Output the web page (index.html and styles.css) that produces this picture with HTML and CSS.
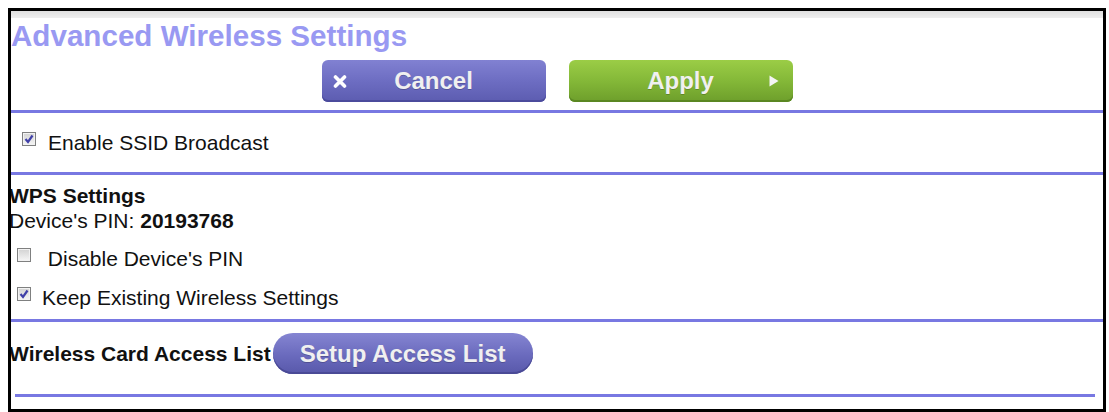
FILE: index.html
```html
<!DOCTYPE html>
<html lang="en">
<head>
	<meta charset="UTF-8">
	<title>Advanced Wireless Settings</title>
	<link rel="stylesheet" href="styles.css">
</head>
<body>
	<div class="frame">
		<div class="topband"></div>
		<h1 class="title">Advanced Wireless Settings</h1>
		<div class="actions">
			<button type="button" class="btn btn-cancel">
				<svg class="x-ico" width="14" height="13" viewBox="0 0 14 13"><path d="M2.5 2 L11.5 11 M11.5 2 L2.5 11" stroke="#fff" stroke-width="3.6" stroke-linecap="round"/></svg>
				<span>Cancel</span>
				<i></i>
			</button>
			<button type="button" class="btn btn-apply">
				<i></i>
				<span>Apply</span>
				<svg class="arrow" width="10" height="12" viewBox="0 0 10 12"><path d="M0.5 0.5 L9.5 6 L0.5 11.5 Z" fill="#f4f4f4"/></svg>
			</button>
		</div>
		<hr class="rule rule-top">

		<div class="sec sec-ssid">
			<label class="opt opt-ssid"><span class="cb"><svg width="10" height="10" viewBox="0 0 10 10"><path d="M1.5 5 L4 8 L8.5 1.5" fill="none" stroke="#4040a8" stroke-width="2.2"/></svg></span>Enable SSID Broadcast</label>
		</div>
		<hr class="rule">

		<div class="sec sec-wps">
			<div class="head">WPS Settings</div>
			<div class="pin">Device's PIN: <b>20193768</b></div>
			<label class="opt opt-pin"><span class="cb"></span>&nbsp;Disable Device's PIN</label>
			<label class="opt opt-keep"><span class="cb"><svg width="10" height="10" viewBox="0 0 10 10"><path d="M1.5 5 L4 8 L8.5 1.5" fill="none" stroke="#4040a8" stroke-width="2.2"/></svg></span>Keep Existing Wireless Settings</label>
		</div>
		<hr class="rule">

		<div class="sec sec-acl">
			<span class="head">Wireless Card Access List</span>
			<button type="button" class="pill">Setup Access List</button>
		</div>
		<hr class="rule rule-end">
	</div>
</body>
</html>
```

FILE: styles.css
```css
body{
	margin: 8px 0 0 8px;
	background-color: #fff;
	font-family: "Liberation Sans", Arial, sans-serif;
	color: #111;
}
.frame{
	width: 1098px;
	height: 404px;
	box-sizing: border-box;
	border: 3px solid #000;
	overflow: hidden;
}
.topband{
	height: 7px;
	background: linear-gradient(#e0e0e0, #eeeeee);
}
.title{
	margin: 1px 0 0 0;
	font-size: 29.6px;
	line-height: 33px;
	font-weight: bold;
	color: #9999f2;
}
.actions{
	display: flex;
	justify-content: center;
	gap: 23px;
	margin-top: 8px;
}
.btn{
	width: 224px;
	height: 42px;
	border: 0;
	border-radius: 6px;
	display: grid;
	grid-template-columns: 1fr auto 1fr;
	align-items: center;
	font-family: "Liberation Sans", Arial, sans-serif;
	font-size: 24px;
	font-weight: bold;
	color: #f0f0f0;
	text-shadow: 0 1px 0 rgba(0,0,0,0.2);
	cursor: pointer;
}
.btn-cancel{
	padding: 0 11px;
	background: linear-gradient(#8181d2 0%, #6d6dc2 50%, #5c5cb0 100%);
	box-shadow: inset 0 -2px 0 #4b4b9c;
}
.btn-apply{
	padding: 0 14px;
	background: linear-gradient(#9bcd46 0%, #84b838 50%, #6d9e2b 100%);
	box-shadow: inset 0 -2px 0 #5a8722;
}
.x-ico{
	justify-self: start;
}
.arrow{
	justify-self: end;
}
.rule{
	margin: 0;
	height: 0;
	border: 0;
	border-top: 3px solid #7878e2;
}
.rule-top{
	margin-top: 8px;
}
.rule-end{
	margin: 0 8px 0 4px;
}
.sec{
	font-size: 21px;
	line-height: 25px;
}
.sec-ssid{
	padding: 17px 0;
}
.sec-wps{
	padding: 8px 0 9px;
}
.sec-acl{
	display: flex;
	align-items: center;
	gap: 2px;
	padding: 11px 0 20px;
}
.head{
	font-weight: bold;
	margin-left: -2px;
}
.pin{
	margin-left: -2px;
}
.opt{
	display: flex;
	align-items: flex-start;
	gap: 11px;
	margin-left: 6px;
}
.opt-ssid{
	margin-left: 11px;
	gap: 12px;
}
.opt-pin{
	margin-top: 13px;
}
.opt-keep{
	margin-top: 14px;
}
.cb{
	width: 14px;
	height: 14px;
	margin-top: 2px;
	box-sizing: border-box;
	border: 1px solid #7f8080;
	background: linear-gradient(#d2d2d2, #f6f6f6);
	box-shadow: inset 0 0 0 1px #f2f2f2;
	display: flex;
	align-items: center;
	justify-content: center;
}
.pill{
	height: 41px;
	padding: 0 27px;
	border: 0;
	border-radius: 20px;
	background: linear-gradient(#8585d2 0%, #6a6abd 55%, #5858aa 100%);
	box-shadow: inset 0 -2px 0 #4a4a96;
	font-family: "Liberation Sans", Arial, sans-serif;
	font-size: 24px;
	font-weight: bold;
	color: #f0f0f0;
	text-shadow: 0 1px 0 rgba(0,0,0,0.2);
}
```
